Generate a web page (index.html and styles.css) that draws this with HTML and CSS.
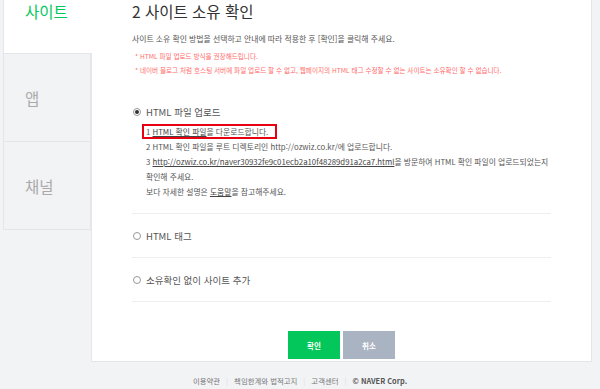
FILE: index.html
```html
<!DOCTYPE html>
<html lang="ko">
<head>
    <meta charset="UTF-8">
    <meta name="viewport" content="width=device-width, initial-scale=1.0">
    <title>사이트 소유 확인</title>
    <link rel="stylesheet" href="styles.css">
</head>
<body>
    <div class="page">
        <!-- 왼쪽 탭 -->
        <ul class="tabs">
            <li class="tab active">사이트</li>
            <li class="tab">앱</li>
            <li class="tab">채널</li>
        </ul>

        <!-- 본문 -->
        <div class="panel">
            <h2>2 사이트 소유 확인</h2>
            <p class="desc">사이트 소유 확인 방법을 선택하고 안내에 따라 적용한 후 [확인]을 클릭해 주세요.</p>
            <ul class="notice">
                <li>* HTML 파일 업로드 방식을 권장해드립니다.</li>
                <li>* 네이버 블로그 처럼 호스팅 서버에 파일 업로드 할 수 없고, 웹페이지의 HTML 태그 수정할 수 없는 사이트는 소유확인 할 수 없습니다.</li>
            </ul>

            <div class="option first">
                <div class="radio-row"><span class="radio checked"></span>HTML 파일 업로드</div>
                <div class="steps">
                    <div class="step"><span class="mark">1 <u>HTML 확인 파일</u>을 다운로드합니다.</span></div>
                    <div class="step">2 HTML 확인 파일을 루트 디렉토리인 http://ozwiz.co.kr/에 업로드합니다.</div>
                    <div class="step">3 <u>http://ozwiz.co.kr/naver30932fe9c01ecb2a10f48289d91a2ca7.html</u>을 방문하여 HTML 확인 파일이 업로드되었는지<br>확인해 주세요.</div>
                    <div class="step">보다 자세한 설명은 <u>도움말</u>을 참고해주세요.</div>
                </div>
            </div>
            <div class="option">
                <div class="radio-row"><span class="radio"></span>HTML 태그</div>
            </div>
            <div class="option">
                <div class="radio-row"><span class="radio"></span>소유확인 없이 사이트 추가</div>
            </div>

            <div class="buttons">
                <button type="button" class="btn ok">확인</button>
                <button type="button" class="btn cancel">취소</button>
            </div>
        </div>
    </div>

    <div class="footer">
        <span>이용약관</span><i>|</i><span>책임한계와 법적고지</span><i>|</i><span>고객센터</span><i>|</i><b>© NAVER Corp.</b>
    </div>
</body>
</html>
```

FILE: styles.css
```css
body {
    font-family: "Noto Sans CJK KR", "Noto Sans", sans-serif;
    background-color: #f2f3f5;
    margin: 0;
    padding: 0;
    color: #555;
}
ul {
    list-style: none;
    margin: 0;
    padding: 0;
}
.page {
    display: flex;
    align-items: flex-start;
    width: 589px;
    margin-top: -35px;
    padding-left: 3px;
}
.tabs {
    width: 88px;
    flex-shrink: 0;
}
.tab {
    height: 87px;
    display: flex;
    align-items: center;
    padding-left: 21px;
    font-size: 15.5px;
    color: #aaa;
    background: #f2f3f5;
    border: 1px solid #e4e6e9;
    border-right: none;
    border-top: none;
}
.tab.active {
    background: #fff;
    color: #03c75a;
    position: relative;
    margin-right: -1px;
    height: 84px;
    padding-top: 4px;
}
.tab + .tab {
    border-right: 1px solid #e4e6e9;
}
.panel {
    flex: 1;
    background: #fff;
    border: 1px solid #e4e6e9;
    border-top: none;
    padding: 34px 40px 2px 40px;
}
h2 {
    margin: 0;
    font-size: 15.5px;
    font-weight: normal;
    color: #333;
    line-height: 24px;
}
.desc {
    margin: 9px 0 0;
    font-size: 7.85px;
    line-height: 13px;
}
.notice {
    margin-top: 5px;
    padding-left: 3px;
    color: #ff6b6b;
    font-size: 6.6px;
    line-height: 13.5px;
}
.option {
    border-bottom: 1px solid #eceef0;
    padding: 14px 0 13px;
}
.option.first {
    margin-top: 27px;
    padding-top: 0;
    padding-bottom: 14px;
}
.radio-row {
    display: flex;
    align-items: center;
    font-size: 9.5px;
    color: #555;
    line-height: 16px;
}
.radio {
    width: 6px;
    height: 6px;
    border: 1px solid #999;
    border-radius: 50%;
    margin: 0 5px 0 1px;
    display: flex;
    align-items: center;
    justify-content: center;
}
.radio.checked::after {
    content: "";
    width: 4px;
    height: 4px;
    border-radius: 50%;
    background: #333;
}
.steps {
    margin-top: 4px;
    padding-left: 14px;
    font-size: 7.8px;
    line-height: 15px;
}
.step u {
    color: #444;
}
.mark {
    display: inline-block;
    border: 2px solid #e60012;
    margin-left: -4px;
    padding: 0 7px 0 2px;
    line-height: 11px;
}
.buttons {
    display: flex;
    justify-content: center;
    gap: 3px;
    margin-top: 29px;
}
.btn {
    width: 52px;
    height: 28px;
    border: none;
    color: #fff;
    font-family: inherit;
    font-size: 7.5px;
    font-weight: bold;
    cursor: pointer;
}
.ok {
    background: #03c75a;
}
.cancel {
    background: #aab3c1;
}
.footer {
    text-align: center;
    font-size: 7.4px;
    line-height: 12px;
    color: #777;
    padding-top: 13px;
}
.footer i {
    font-style: normal;
    color: #ddd;
    margin: 0 6px;
}
.footer b {
    color: #555;
}
```
